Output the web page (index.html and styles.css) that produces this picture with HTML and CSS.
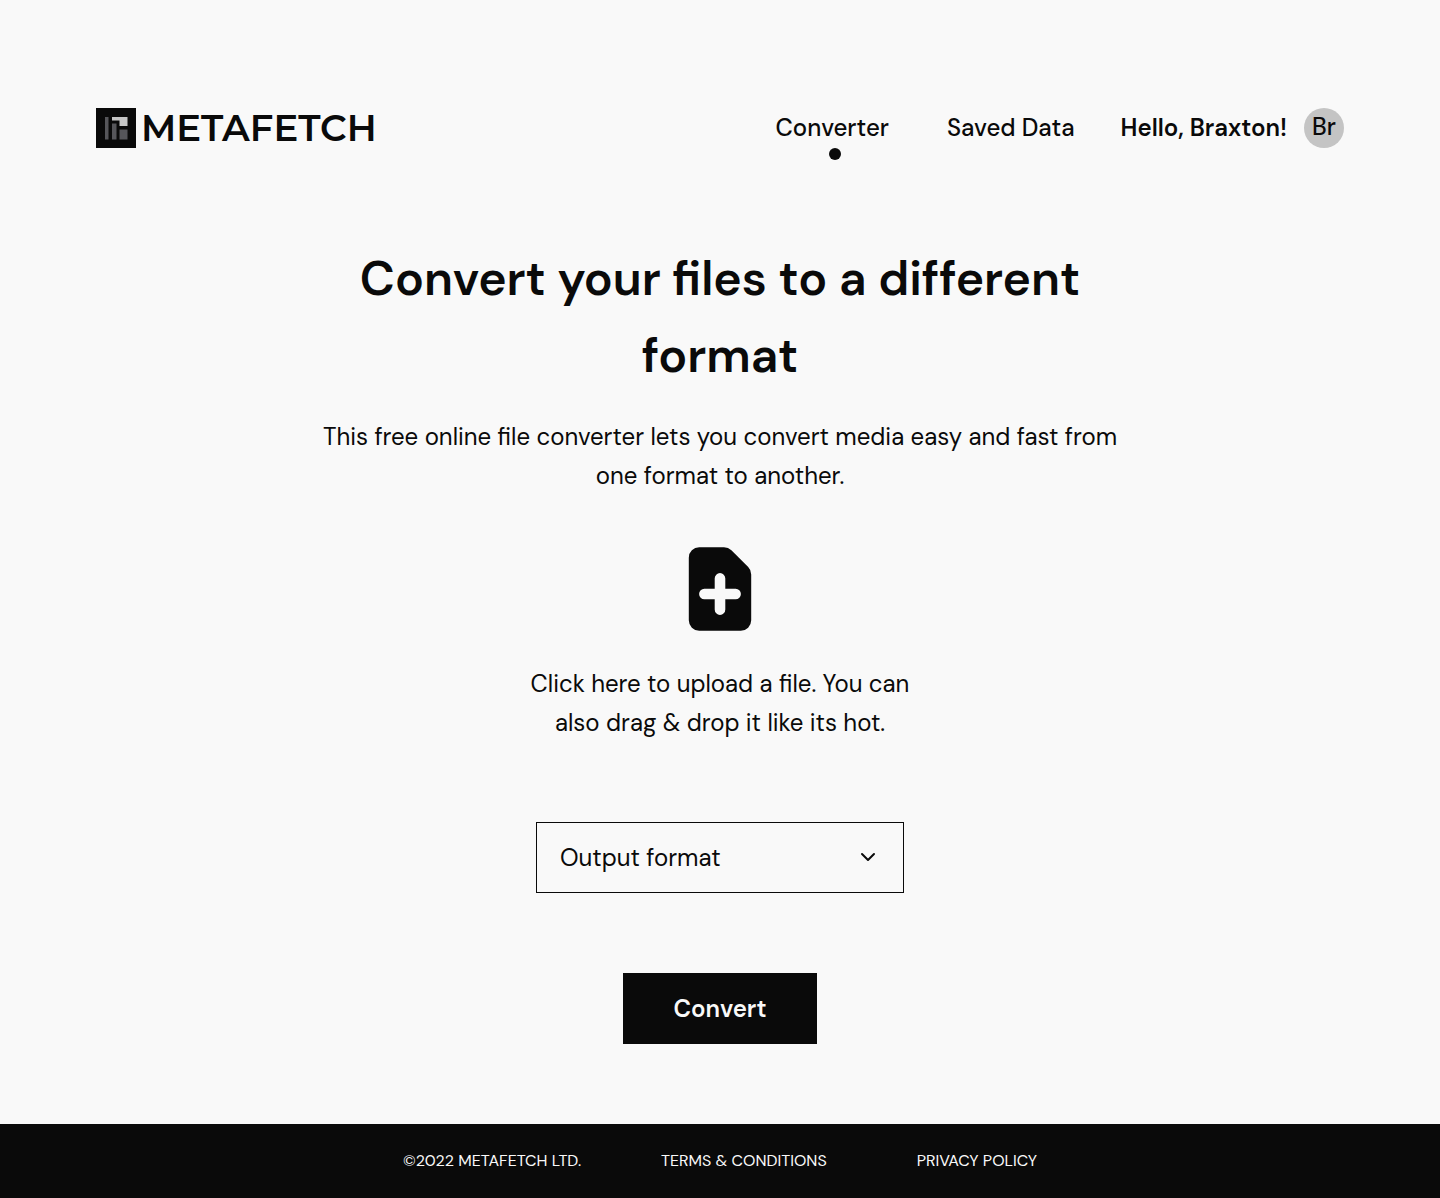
FILE: index.html
```html
<!DOCTYPE html>
<html lang="en">
<head>
<meta charset="utf-8">
<meta name="viewport" content="width=device-width, initial-scale=1">
<title>Metafetch – File converter</title>
<link rel="stylesheet" href="styles.css">
</head>
<body>
<header class="site-header">
  <a class="logo" href="#">
    <svg class="logo-mark" viewBox="0 0 40 40" aria-hidden="true">
      <path fill="#0a0a0a" d="M0 0h40v40H0z"/>
      <path fill="#56565a" d="M9 9h3.500v22.500H9zM16 15.500h4.500V31.500H16zM23.500 21.500h8v10h-8z"/>
      <path fill="#c6c6c6" d="M16 9h15.500v9h-8v-5.500H16z"/>
    </svg>
    <span class="logo-name">METAFETCH</span>
  </a>
  <nav class="site-nav">
    <a class="nav-link nav-link-active" href="#">Converter</a>
    <a class="nav-link" href="#">Saved Data</a>
    <a class="account" href="#"><span>Hello, Braxton!</span><span class="avatar">Br</span></a>
  </nav>
</header>
<main class="converter">
  <h1 class="title">Convert your files to a different format</h1>
  <p class="intro">This free online file converter lets you convert media easy and fast from one format to another.</p>
  <form class="convert-form">
    <label class="upload" for="file">
      <svg class="upload-icon" viewBox="0 0 100 100" aria-hidden="true">
        <path fill="#0a0a0a" d="M29.200 8.300H54q4.300 0 7.400 3L78.200 28.100q3 3 3 7.300V81.300a10.400 10.400 0 0 1-10.400 10.400H29.200a10.400 10.400 0 0 1-10.400-10.400V18.700a10.400 10.400 0 0 1 10.400-10.400z"/>
        <path stroke="#f9f9f9" stroke-width="10.600" stroke-linecap="round" d="M50 39.400V70.600M34.400 55H65.600"/>
      </svg>
      <span>Click here to upload a file. You can also drag &amp; drop it like its hot.</span>
    </label>
    <input class="visually-hidden" type="file" id="file">
    <div class="format">
      <select class="format-select" id="format" aria-label="Output format">
        <option>Output format</option>
      </select>
      <svg class="format-arrow" viewBox="0 0 24 24" aria-hidden="true">
        <path fill="none" stroke="#0a0a0a" stroke-width="2" stroke-linecap="round" stroke-linejoin="round" d="M6 9l6 6 6-6"/>
      </svg>
    </div>
    <button class="convert-button" type="button">Convert</button>
  </form>
</main>
<footer class="site-footer">
  <span>©2022 METAFETCH LTD.</span>
  <a href="#">TERMS &amp; CONDITIONS</a>
  <a href="#">PRIVACY POLICY</a>
</footer>
</body>
</html>
```
FILE: styles.css
```css
* { box-sizing: border-box; }

body {
  margin: 0;
  min-height: 100vh;
  display: flex;
  flex-direction: column;
  background: #f9f9f9;
  color: #0a0a0a;
  font-family: "DM Sans", Lato, sans-serif;
  font-size: 24px;
  line-height: 39px;
}

a { color: inherit; text-decoration: none; }

.site-header {
  display: flex;
  justify-content: space-between;
  align-items: center;
  padding: 108px 96px 92px;
}

.logo { display: flex; align-items: center; gap: 5px; }
.logo-mark { width: 40px; height: 40px; }
.logo-name {
  font: 600 37px/40px Montserrat, "DejaVu Sans", sans-serif;
}

.site-nav { display: flex; align-items: flex-start; }
.nav-link { position: relative; margin-right: 58px; font-weight: 500; }
.nav-link + .nav-link { margin-right: 46px; }
.nav-link-active::after {
  content: "";
  position: absolute;
  left: 50%;
  bottom: -13px;
  width: 12px;
  height: 12px;
  margin-left: -3px;
  border-radius: 50%;
  background: #0a0a0a;
}

.account { display: flex; align-items: flex-start; gap: 17px; font-weight: 600; }
.avatar {
  width: 40px;
  height: 40px;
  border-radius: 50%;
  background: #c4c4c4;
  font-weight: 500;
  line-height: 38px;
  text-align: center;
}

.converter {
  flex: 1;
  display: flex;
  flex-direction: column;
  align-items: center;
  padding: 0 24px 80px;
  text-align: center;
}
.title {
  max-width: 800px;
  margin: 0 0 23px;
  font-size: 48px;
  font-weight: 600;
  line-height: 77px;
}
.intro { max-width: 800px; margin: 0 0 44px; }

.convert-form {
  display: flex;
  flex-direction: column;
  align-items: center;
  gap: 80px;
}
.upload {
  display: flex;
  flex-direction: column;
  align-items: center;
  gap: 25px;
  max-width: 400px;
  cursor: pointer;
}
.upload-icon { width: 100px; height: 100px; }

.format { position: relative; width: 368px; max-width: 100%; }
.format-select {
  display: block;
  width: 100%;
  padding: 15px 64px 15px 23px;
  appearance: none;
  border: 1px solid #0a0a0a;
  border-radius: 0;
  background: transparent;
  color: inherit;
  font: inherit;
}
.format-arrow {
  position: absolute;
  top: 23px;
  right: 24px;
  width: 24px;
  height: 24px;
  pointer-events: none;
}

.convert-button {
  width: 194px;
  height: 71px;
  border: 0;
  background: #0a0a0a;
  color: #f9f9f9;
  font: inherit;
  font-weight: 600;
  cursor: pointer;
}

.site-footer {
  display: flex;
  justify-content: center;
  padding: 24px;
  gap: 80px;
  background: #0a0a0a;
  color: #f9f9f9;
  font-size: 16px;
  line-height: 26px;
}
.site-footer a + a { margin-left: 10px; }

.visually-hidden {
  position: absolute;
  width: 1px;
  height: 1px;
  overflow: hidden;
  clip-path: inset(50%);
}
```
